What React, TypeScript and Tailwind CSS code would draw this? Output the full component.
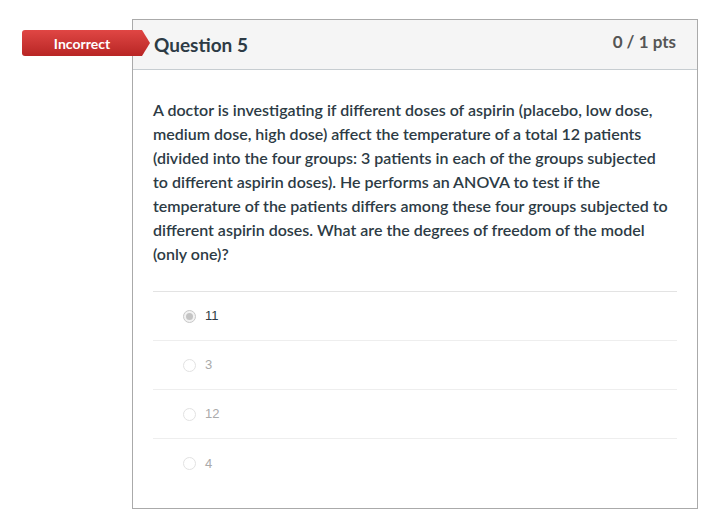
import React from 'react';

const answers = [
  { label: '11', selected: true },
  { label: '3', selected: false },
  { label: '12', selected: false },
  { label: '4', selected: false },
];

const Radio: React.FC<{ selected: boolean }> = ({ selected }) => (
  <span
    className={`flex h-[13px] w-[13px] items-center justify-center rounded-full border ${
      selected ? 'border-[#c8c8c8] bg-[#f2f2f2]' : 'border-[#e2e2e2] bg-white'
    }`}
  >
    {selected && <span className="h-[7px] w-[7px] rounded-full bg-[#c4c4c4]" />}
  </span>
);

export default function App() {
  return (
    <div className="min-h-[523px] bg-white pt-[19px] pl-[132px]" style={{ fontFamily: 'Lato, "Open Sans", sans-serif' }}>
      <div className="relative w-[566px] border border-[#aaaaaa]">
        {/* Incorrect badge */}
        <div className="absolute left-[-111px] top-[10px] flex h-[26px] w-[128px] items-center rounded-l-[3px] bg-gradient-to-b from-[#e04644] to-[#b82524] pr-[8px] [clip-path:polygon(0_0,120px_0,128px_50%,120px_100%,0_100%)]">
          <span className="w-full text-center text-[14px] font-bold text-white">Incorrect</span>
        </div>

        {/* Header */}
        <div className="flex h-[50px] items-center justify-between border-b border-[#c7cdd1] bg-[#f5f5f5] pl-[21px] pr-[21px]">
          <h2 className="pt-[2px] text-[19px] font-bold text-[#2d3b45]">Question 5</h2>
          <span className="pb-[5px] text-[17px] font-bold text-[#555555]">0 / 1 pts</span>
        </div>

        {/* Body */}
        <div className="px-5 pt-[28px] pb-5">
          <p className="max-w-[518px] text-[16px] font-semibold leading-[24px] text-[#2d3b45]">
            A doctor is investigating if different doses of aspirin (placebo, low dose, medium dose, high dose) affect the
            temperature of a total 12 patients (divided into the four groups: 3 patients in each of the groups subjected
            to different aspirin doses). He performs an ANOVA to test if the temperature of the patients differs among
            these four groups subjected to different aspirin doses. What are the degrees of freedom of the model (only
            one)?
          </p>

          <div className="mt-[25px] border-t border-[#e3e3e3]">
            {answers.map((a, i) => (
              <div
                key={a.label}
                className={`flex h-[49px] items-center gap-[9px] pl-[30px] ${
                  i < answers.length - 1 ? 'border-b border-[#eeeeee]' : ''
                }`}
                style={{ fontFamily: '"Liberation Sans", Arial, sans-serif' }}
              >
                <Radio selected={a.selected} />
                <span className={`text-[13px] ${a.selected ? 'text-[#2d3b45]' : 'text-[#aaaaaa]'}`}>{a.label}</span>
              </div>
            ))}
          </div>
        </div>
      </div>
    </div>
  );
}
